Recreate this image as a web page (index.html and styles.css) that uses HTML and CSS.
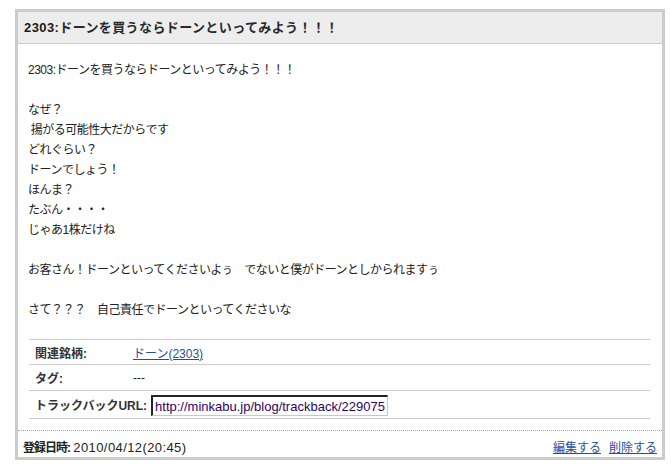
FILE: index.html
```html
<!DOCTYPE html>
<html lang="ja">
<head>
<meta charset="utf-8">
<title>2303:ドーンを買うならドーンといってみよう！！！</title>
<link rel="stylesheet" href="styles.css">
</head>
<body>
<div class="entry">
  <div class="entry-head"><span class="num">2303</span>:ドーンを買うならドーンといってみよう！！！</div>
  <div class="entry-body">
    <p class="line"><span class="num">2303</span>:ドーンを買うならドーンといってみよう！！！</p>
    <p class="line">&nbsp;</p>
    <p class="line">なぜ？</p>
    <p class="line">&nbsp;揚がる可能性大だからです</p>
    <p class="line">どれぐらい？</p>
    <p class="line">ドーンでしょう！</p>
    <p class="line">ほんま？</p>
    <p class="line">たぶん・・・・</p>
    <p class="line">じゃあ<span class="num">1</span>株だけね</p>
    <p class="line">&nbsp;</p>
    <p class="line">お客さん！ドーンといってくださいよぅ　でないと僕がドーンとしかられますぅ</p>
    <p class="line">&nbsp;</p>
    <p class="line">さて？？？　自己責任でドーンといってくださいな</p>
  </div>
  <div class="meta">
    <div class="meta-row">
      <div class="meta-label">関連銘柄:</div>
      <div class="meta-value"><a href="#" class="link">ドーン(2303)</a></div>
    </div>
    <div class="meta-row">
      <div class="meta-label">タグ:</div>
      <div class="meta-value">---</div>
    </div>
    <div class="meta-row meta-row-tall">
      <div class="meta-label">トラックバックURL:</div>
      <div class="meta-value"><input class="tb-input" type="text" value="http://minkabu.jp/blog/trackback/229075" readonly></div>
    </div>
  </div>
  <div class="entry-foot">
    <div class="date"><span class="date-label">登録日時:</span> <span class="date-value">2010/04/12(20:45)</span></div>
    <div class="actions">
      <a href="#" class="link">編集する</a>
      <a href="#" class="link">削除する</a>
    </div>
  </div>
</div>
</body>
</html>
```

FILE: styles.css
```css
html, body {
  margin: 0;
  padding: 0;
  background: #ffffff;
}

body {
  font-family: "Liberation Sans", "Noto Sans CJK JP", sans-serif;
  color: #222222;
  font-size: 12px;
}

.entry {
  width: 644px;
  margin: 9px 0 0 15px;
  border: 3px solid #cccccc;
  background: #ffffff;
}

.entry-head {
  height: 31px;
  line-height: 31px;
  background: #ededed;
  border-bottom: 1px solid #cccccc;
  padding-left: 6px;
  font-size: 13px;
  font-weight: bold;
  color: #2a2a2a;
  letter-spacing: 0.4px;
}

.entry-head .num {
  color: #1a1a1a;
}

.entry-body {
  padding: 16px 10px 0 10px;
}

.line {
  margin: 0;
  line-height: 20px;
  height: 20px;
  white-space: nowrap;
  letter-spacing: -0.5px;
}

.meta {
  margin: 19px 12px 0 11px;
  border-bottom: 1px solid #cccccc;
}

.meta-row {
  display: flex;
  align-items: center;
  height: 24px;
  border-top: 1px solid #cccccc;
}

.meta-row + .meta-row {
  height: 25px;
}

.meta-row.meta-row-tall {
  height: 27px;
}

.meta-label {
  flex-shrink: 0;
  min-width: 98px;
  padding-left: 6px;
  white-space: nowrap;
  font-weight: bold;
  color: #333333;
}

.meta-value {
  display: flex;
  align-items: center;
}

.link {
  color: #1f4fa0;
  text-decoration: underline;
}

.tb-input {
  box-sizing: border-box;
  width: 237px;
  height: 21px;
  margin: 2px 0 0 4px;
  padding: 1px 2px 0 2px;
  border-style: solid;
  border-width: 2px 1px 1px 2px;
  border-color: #222222 #c8c8c8 #c8c8c8 #222222;
  font-family: "Liberation Sans", sans-serif;
  font-size: 13px;
  color: #330066;
  background: #ffffff;
  outline: none;
}

.entry-foot {
  margin-top: 11px;
  border-top: 1px dotted #aaaaaa;
  display: flex;
  justify-content: space-between;
  align-items: center;
  height: 20px;
  padding: 5px 5px 1px 5px;
}

.date-label {
  font-weight: bold;
  letter-spacing: -1px;
}

.date-value {
  font-size: 13px;
  letter-spacing: 0.4px;
}

.actions {
  display: flex;
  gap: 8px;
}
```
